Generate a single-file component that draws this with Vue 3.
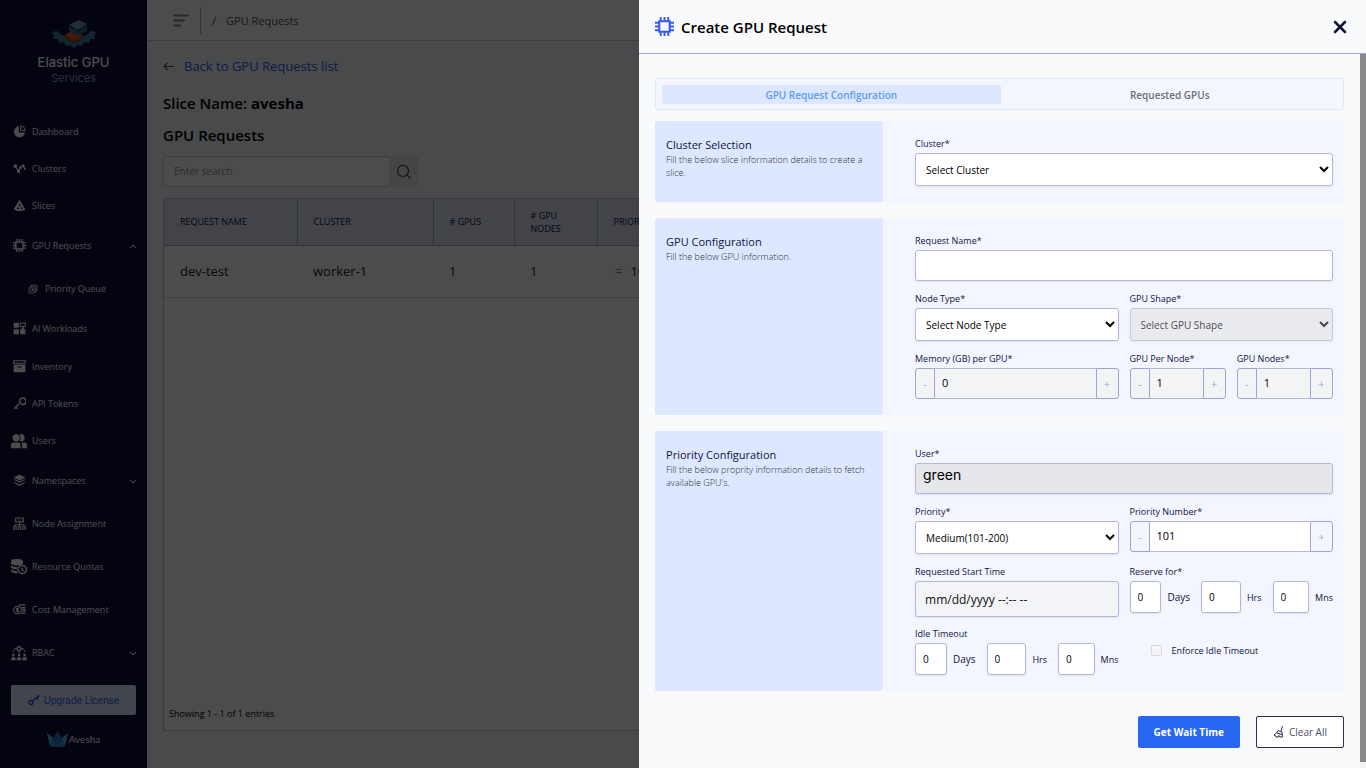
<script setup>
import { ref } from 'vue'

const chip = [
  { s: 'M4.500 4.500h11v11h-11z', w: 2.2 },
  { s: 'M6 0v4M10 0v4M14 0v4M6 16v4M10 16v4M14 16v4M0 6h4M0 10h4M0 14h4M16 6h4M16 10h4M16 14h4', w: 2 },
]

const nav = [
  { label: 'Dashboard', icon: [{ f: 'M9 2a8.500 8.500 0 1 0 9.500 9.500H9z' }, { s: 'M12 1.500a7 7 0 0 1 6.500 7h-6.500z', w: 1.6 }] },
  { label: 'Clusters', icon: [{ s: 'M3.500 7L9 14L12 7M16 6.500L18 10', w: 1.8 }, { f: 'M1 4h5v5H1zM6 11.500h5v5H6zM10 7h3.500v3.500H10zM13.500 4h4v4h-4zM17 8.500h2.500V12H17z' }] },
  { label: 'Slices', icon: [{ f: 'M10 1L19 16Q10 21 1 16zM9 8v3h2.500V8zM6 13v2.500h3V13zM12 13v2.500h2.500V13z' }] },
  { label: 'GPU Requests', icon: chip, arrow: 'up', tall: true },
  { label: 'Priority Queue', sub: true, tall: true, icon: [{ s: 'M6 6V2h12v12h-3M4 8V5h11v12h-2M2 8h10v10H2z', w: 1.5 }, { f: 'M5 11h2v4H5zM8 10h2v4H8z' }] },
  { label: 'AI Workloads', icon: [{ f: 'M1 1h8v8H1zM1 11h8v8H1zM11 11h8v8h-8z' }, { s: 'M11 2h8v5h-8z', w: 1.6 }, { f: 'M14 8h3v4h-3z' }] },
  { label: 'Inventory', mid: true, icon: [{ s: 'M1 1h18v4H1z', w: 1.6 }, { f: 'M1 7h18v12H1zM7 10v1.500h6V10z' }] },
  { label: 'API Tokens', icon: [{ s: 'M13 2a5 5 0 1 1 0 9a5 5 0 0 1 0-9M9.500 10L2 18M4 15l3 3', w: 2.4 }] },
  { label: 'Users', big: true, icon: [{ f: 'M2 6a4.500 4.500 0 1 1 9 0a4.500 4.500 0 0 1-9 0M0 19v-4q0-3 4-3h5q3 0 3 3v4zM11 1.500q6-1 6 4.500t-6 4.500q2-4 0-9M13.500 12h3q3.500 0 3.500 4v3h-6z' }] },
  { label: 'Namespaces', arrow: 'down', tall: true, icon: [{ f: 'M10 1l9 4.500l-9 4.500l-9-4.500zM1 9l2-1l7 3.500L17 8l2 1l-9 4.500zM1 13.500l2-1l7 3.500l7-3.500l2 1l-9 5z' }] },
  { label: 'Node Assignment', tall: true, icon: [{ s: 'M4 1.500h12v6H4zM10 8v4M3 15v-3h14v3M10 12v3M1 15h4v4H1zM8 15h4v4H8zM15 15h4v4h-4zM7 4.500h2M11 4.500h2', w: 1.6 }] },
  { label: 'Resource Quotas', tall: true, big: true, icon: [{ f: 'M0 3q0-3 7.500-3T15 3v3q-2 2-7.500 2T0 6zM0 8q3 2 8 2l-1 3q-5 0-7-2zM0 13q3 2 7 2l1 3q-6 0-8-3z' }, { s: 'M14 8a5.200 5.200 0 1 1-.01 0M14 10.500v3l2 1.500', w: 1.8 }] },
  { label: 'Cost Management', tall: true, icon: [{ s: 'M7 5a6 6 0 1 1-.01 0M9 8.500Q5 7.500 5 9.500T7 11t2 2q-.5 1.500-4 .5M7 7v8', w: 1.6 }, { s: 'M9 3.500q5-2 10 0M13 7h6M14.500 10h5M14.500 13h5M13 16h6', w: 2 }] },
  { label: 'RBAC', arrow: 'down', tall: true, big: true, icon: [{ s: 'M10 2a2.500 2.500 0 1 1-.01 0M7 4.500H5M13 4.500h2M10 7v3', w: 1.7 }, { s: 'M5 4L2 9M15 4l3 5', w: 1.2 }, { f: 'M1.500 11h3v3h-3zM8.500 11h3v3h-3zM15.500 11h3v3h-3zM0 19q0-4 3-4t3 4zM7 19q0-4 3-4t3 4zM14 19q0-4 3-4t3 4z' }] },
]

const search = ref('')
const requestName = ref('')
const startTime = ref('')
const enforce = ref(false)
const user = ref('green')
const memory = ref('0')
const perNode = ref('1')
const nodes = ref('1')
const priorityNumber = ref('101')
const reserve = ref([
  { unit: 'Days', value: '0' },
  { unit: 'Hrs', value: '0' },
  { unit: 'Mns', value: '0' },
])
const idle = ref([
  { unit: 'Days', value: '0' },
  { unit: 'Hrs', value: '0' },
  { unit: 'Mns', value: '0' },
])
</script>

<template>
  <div class="app">
    <aside class="sidebar">
      <div class="brand">
        <svg width="46" height="30" viewBox="0 0 46 30">
          <path d="M1 12l5-1 3 3 6 3 2 3 6 3 6-3 2-3 6-3 3-3 5 1-2 4 1 3-5 0-1 4-5-1-2 4-4-1-4 3-4-3-4 1-2-4-5 1-1-4-5 0 1-3z" fill="#3f7aa0" />
          <path d="M14 15l8-5 10 5-9 6z" fill="#e0562c" />
          <path d="M14 15v3l9 5v-3zM23 20l9-5v3l-9 5z" fill="#b23d1d" />
          <path d="M18 5l10-5 8 4-9 6z" fill="#6d9cc0" />
          <path d="M18 6v5l9 5v-5zM27 11l9-6v6l-9 5z" fill="#3a648b" />
        </svg>
        <div class="brand-name">Elastic GPU</div>
        <div class="brand-sub">Services</div>
      </div>
      <nav>
        <a v-for="item in nav" :key="item.label" href="#" class="nav-item" :class="{ tall: item.tall, mid: item.mid, sub: item.sub }">
          <span class="nav-icon">
            <svg :class="{ big: item.big }" viewBox="0 0 20 20">
              <path v-for="(p, i) in item.icon" :key="i" :d="p.f || p.s" :fill="p.f ? 'currentColor' : 'none'" fill-rule="evenodd" :stroke="p.s ? 'currentColor' : 'none'" :stroke-width="p.w || 0" />
            </svg>
          </span>
          <span>{{ item.label }}</span>
          <svg v-if="item.arrow" class="chevron" viewBox="0 0 8 8">
            <path :d="item.arrow === 'up' ? 'M1 6l3-3 3 3' : 'M1 3l3 3 3-3'" fill="none" stroke="currentColor" stroke-width="1" />
          </svg>
        </a>
      </nav>
      <button class="upgrade" type="button">
        <svg width="12" height="12" viewBox="0 0 12 12" fill="none" stroke="currentColor" stroke-width="1.500">
          <circle cx="3" cy="8.500" r="2" />
          <path d="M4.500 7L10.500 2M8 3l2 2.500M10.500 1v3" />
        </svg>
        Upgrade License
      </button>
      <div class="avesha">
        <svg width="21" height="16" viewBox="0 0 21 16">
          <path d="M0 2l6 5 1 9-4-1z" fill="#6fb6e8" />
          <path d="M21 2l-6 5-1 9 4-1z" fill="#6fb6e8" />
          <path d="M10.500 0L15 7l-1 8-3.500 1L7 15 6 7z" fill="#2573c9" />
          <path d="M5 6l5.500 10L3 15zM16 6l-5.500 10 7.500-1z" fill="#3b8edc" />
        </svg>
        <span>Avesha</span>
      </div>
    </aside>

    <section class="page">
      <header class="topbar">
        <svg width="16" height="13" viewBox="0 0 16 13" stroke="#7e8898" stroke-width="2" stroke-linecap="round">
          <path d="M1 1.500h14M1 6.500h10M1 11.500h6" />
        </svg>
        <span class="divider"></span>
        <span class="slash">/</span>
        <span>GPU Requests</span>
      </header>
      <main class="content">
        <a href="#" class="back">
          <svg width="11" height="9" viewBox="0 0 11 9" fill="none" stroke="#555" stroke-width="1.200">
            <path d="M11 4.500H1M4.500 1L1 4.500 4.500 8" />
          </svg>
          <span>Back to GPU Requests list</span>
        </a>
        <h2>Slice Name: <b>avesha</b></h2>
        <h2>GPU Requests</h2>
        <div class="search">
          <input v-model="search" type="text" placeholder="Enter search" aria-label="Search">
          <button type="button" aria-label="Run search">
            <svg width="14" height="14" viewBox="0 0 14 14" fill="none" stroke="#444" stroke-width="1.200">
              <circle cx="6" cy="6" r="5.500" />
              <path d="M10 10l3.500 3.500" />
            </svg>
          </button>
        </div>
        <div class="table-box">
          <table>
            <colgroup>
              <col class="c1"><col class="c2"><col class="c3"><col class="c4"><col>
            </colgroup>
            <thead>
              <tr>
                <th>REQUEST NAME</th>
                <th>CLUSTER</th>
                <th># GPUS</th>
                <th># GPU NODES</th>
                <th>PRIORITY</th>
              </tr>
            </thead>
            <tbody>
              <tr>
                <td>dev-test</td>
                <td>worker-1</td>
                <td>1</td>
                <td>1</td>
                <td><span class="level">=</span>101</td>
              </tr>
            </tbody>
          </table>
          <p class="showing">Showing 1 - 1 of 1 entries</p>
        </div>
      </main>
    </section>

    <div class="overlay"></div>

    <section class="drawer" role="dialog" aria-labelledby="drawer-title">
      <header class="drawer-head">
        <svg class="drawer-chip" viewBox="0 0 20 20">
          <path v-for="(p, i) in chip" :key="i" :d="p.s" fill="none" stroke="currentColor" :stroke-width="p.w" />
        </svg>
        <h1 id="drawer-title">Create GPU Request</h1>
        <button class="close" type="button" aria-label="Close">
          <svg width="14" height="14" viewBox="0 0 14 14" fill="none" stroke="#11143f" stroke-width="2.500" stroke-linecap="round">
            <path d="M2 2l10 10M12 2L2 12" />
          </svg>
        </button>
      </header>

      <div class="drawer-body">
        <form class="form" @submit.prevent>
          <div class="tabs">
            <button type="button" class="tab active">GPU Request Configuration</button>
            <button type="button" class="tab">Requested GPUs</button>
          </div>

          <div class="card">
            <div class="card-info">
              <h3>Cluster Selection</h3>
              <p>Fill the below slice information details to create a slice.</p>
            </div>
            <div class="card-fields">
              <div class="field full">
                <label for="cluster">Cluster*</label>
                <select id="cluster"><option>Select Cluster</option></select>
              </div>
            </div>
          </div>

          <div class="card">
            <div class="card-info">
              <h3>GPU Configuration</h3>
              <p>Fill the below GPU information.</p>
            </div>
            <div class="card-fields">
              <div class="field full">
                <label for="request-name">Request Name*</label>
                <input id="request-name" v-model="requestName" class="box" type="text">
              </div>
              <div class="field">
                <label for="node-type">Node Type*</label>
                <select id="node-type"><option>Select Node Type</option></select>
              </div>
              <div class="field">
                <label for="gpu-shape">GPU Shape*</label>
                <select id="gpu-shape" disabled><option>Select GPU Shape</option></select>
              </div>
              <div class="field">
                <label for="memory">Memory (GB) per GPU*</label>
                <div class="stepper muted">
                  <button type="button" aria-label="Decrease memory">-</button>
                  <input id="memory" v-model="memory" type="text">
                  <button type="button" class="plus" aria-label="Increase memory">+</button>
                </div>
              </div>
              <div class="pair">
                <div class="field">
                  <label for="per-node">GPU Per Node*</label>
                  <div class="stepper muted">
                    <button type="button" aria-label="Decrease GPU per node">-</button>
                    <input id="per-node" v-model="perNode" type="text">
                    <button type="button" class="plus" aria-label="Increase GPU per node">+</button>
                  </div>
                </div>
                <div class="field">
                  <label for="gpu-nodes">GPU Nodes*</label>
                  <div class="stepper muted">
                    <button type="button" aria-label="Decrease GPU nodes">-</button>
                    <input id="gpu-nodes" v-model="nodes" type="text">
                    <button type="button" class="plus" aria-label="Increase GPU nodes">+</button>
                  </div>
                </div>
              </div>
            </div>
          </div>

          <div class="card">
            <div class="card-info">
              <h3>Priority Configuration</h3>
              <p>Fill the below proprity information details to fetch available GPU's.</p>
            </div>
            <div class="card-fields">
              <div class="field full">
                <label for="user">User*</label>
                <input id="user" v-model="user" class="box user" type="text" readonly>
              </div>
              <div class="field">
                <label for="priority">Priority*</label>
                <select id="priority"><option>Medium(101-200)</option></select>
              </div>
              <div class="field">
                <label for="priority-number">Priority Number*</label>
                <div class="stepper">
                  <button type="button" aria-label="Decrease priority">-</button>
                  <input id="priority-number" v-model="priorityNumber" type="text">
                  <button type="button" class="plus" aria-label="Increase priority">+</button>
                </div>
              </div>
              <div class="times full">
                <div class="field">
                  <label for="start-time">Requested Start Time</label>
                  <input id="start-time" v-model="startTime" class="box start" type="text" placeholder="mm/dd/yyyy --:-- --">
                </div>
                <div class="field">
                  <label for="reserve-Days">Reserve for*</label>
                  <div class="durations">
                    <div v-for="d in reserve" :key="d.unit" class="duration">
                      <input :id="'reserve-' + d.unit" v-model="d.value" class="box" type="text">
                      <label :for="'reserve-' + d.unit" :class="{ days: d.unit === 'Days' }">{{ d.unit }}</label>
                    </div>
                  </div>
                </div>
                <div class="field">
                  <label for="idle-Days">Idle Timeout</label>
                  <div class="durations">
                    <div v-for="d in idle" :key="d.unit" class="duration">
                      <input :id="'idle-' + d.unit" v-model="d.value" class="box" type="text">
                      <label :for="'idle-' + d.unit" :class="{ days: d.unit === 'Days' }">{{ d.unit }}</label>
                    </div>
                  </div>
                </div>
                <div class="enforce">
                  <input id="enforce" v-model="enforce" type="checkbox">
                  <label for="enforce">Enforce Idle Timeout</label>
                </div>
              </div>
            </div>
          </div>

          <div class="actions">
            <button type="submit" class="primary">Get Wait Time</button>
            <button type="button" class="ghost">
              <svg width="11" height="12" viewBox="0 0 11 12" fill="none" stroke="#2b2d55" stroke-width="1">
                <path d="M9.500 0L8 5M5 4.500L9 6l.5 5H7L6 9.500 5.500 11H3L2.500 9.500 1 9q3-1.500 4-4.500zM4 7l5 1.500" />
              </svg>
              Clear All
            </button>
          </div>
        </form>
        <div class="scroll-track"><div class="scroll-thumb"></div></div>
      </div>
    </section>
  </div>
</template>

<style>
body {
  overflow: hidden;
}
</style>

<style scoped>
.app {
  display: flex;
  height: 100vh;
  overflow: hidden;
  font-family: "Open Sans", "Noto Sans", sans-serif;
  font-size: 11px;
  color: #000;
}
.app *,
.app *::before {
  box-sizing: border-box;
}
button,
input,
select {
  font-family: inherit;
  margin: 0;
}
button {
  cursor: pointer;
}
a {
  text-decoration: none;
}

/* sidebar */
.sidebar {
  flex: 0 0 147px;
  background: #0e1038;
  color: #fff;
}
.brand {
  height: 113px;
  padding-top: 20px;
  text-align: center;
  font-family: Inter, "Open Sans", sans-serif;
}
.brand svg {
  display: block;
  margin: 0 auto;
}
.brand-name {
  margin-top: 3px;
  font-size: 13px;
  font-weight: 500;
  line-height: 18px;
}
.brand-sub {
  font-size: 11px;
  line-height: 14px;
  color: #8e9cc0;
}
.nav-item {
  display: flex;
  align-items: center;
  height: 37px;
  padding: 0 10px 0 9px;
  font-size: 9px;
  color: #fff;
  white-space: nowrap;
}
.nav-item.mid {
  height: 38px;
}
.nav-item.tall {
  height: 43px;
}
.nav-item.sub {
  padding-left: 23px;
}
.nav-icon {
  display: flex;
  justify-content: center;
  width: 20px;
  margin-right: 3px;
}
.sub .nav-icon {
  margin-right: 2px;
}
.nav-icon svg {
  width: 13px;
  height: 13px;
}
.nav-icon svg.big {
  width: 16px;
  height: 16px;
}
.sub .nav-icon svg {
  width: 10px;
  height: 10px;
}
.chevron {
  width: 8px;
  height: 8px;
  margin-left: auto;
}
.upgrade {
  display: flex;
  align-items: center;
  justify-content: center;
  gap: 4px;
  width: calc(100% - 22px);
  height: 30px;
  margin: 11px 11px 0;
  border: 0;
  border-radius: 2px;
  background: #dde7ff;
  color: #2563eb;
  font-family: "Liberation Sans", sans-serif;
  font-size: 10px;
}
.avesha {
  display: flex;
  align-items: center;
  justify-content: center;
  gap: 1px;
  height: 48px;
  font-family: Lato, sans-serif;
  font-size: 10px;
}

/* page behind the drawer */
.page {
  flex: 1;
  min-width: 0;
  display: flex;
  flex-direction: column;
  background: #f5f7fa;
}
.topbar {
  display: flex;
  align-items: center;
  height: 41px;
  padding-left: 26px;
  border-bottom: 1px solid #c9cacc;
  background: #fff;
  color: #555;
}
.divider {
  width: 1px;
  height: 27px;
  margin: 0 11px;
  background: #a0a3c0;
}
.slash {
  margin-right: 10px;
}
.content {
  flex: 1;
  display: flex;
  flex-direction: column;
  padding: 15px 16px 37px;
}
.back {
  display: flex;
  align-items: center;
  gap: 10px;
  height: 20px;
  margin-bottom: 15px;
  font-size: 13px;
  color: #2563eb;
}
h2 {
  margin: 0;
  font-size: 15px;
  font-weight: 600;
  line-height: 24px;
}
h2 b {
  font-weight: 700;
}
h2 + h2 {
  margin-top: 8px;
}
.search {
  display: flex;
  width: 256px;
  height: 31px;
  margin: 9px 0 11px;
}
.search input {
  flex: 1;
  min-width: 0;
  padding: 0 10px 1px;
  border: 1px solid #cdd0d6;
  border-right: 0;
  border-radius: 4px 0 0 4px;
  background: #fff;
  font-size: 10px;
}
.search input::placeholder {
  color: #8f9299;
}
.search button {
  display: grid;
  place-items: center;
  width: 30px;
  border: 0;
  border-radius: 0 4px 4px 0;
  background: #e6e7ee;
}
.table-box {
  flex: 1;
  display: flex;
  flex-direction: column;
  justify-content: space-between;
  border: 1px solid #c5c8d2;
  background: #fff;
}
table {
  width: 100%;
  table-layout: fixed;
  border-collapse: collapse;
}
.c1 { width: 133px; }
.c2 { width: 136px; }
.c3 { width: 81px; }
.c4 { width: 83px; }
th {
  height: 46px;
  padding: 0 16px;
  border-right: 1px solid #a4abcb;
  border-bottom: 1px solid #a4abcb;
  background: #dde4f7;
  color: #11143f;
  font-size: 9px;
  font-weight: 500;
  line-height: 13px;
  text-align: left;
}
td {
  height: 52px;
  padding: 0 16px;
  border-bottom: 1px solid #d9dbe0;
  font-size: 13px;
  color: #222;
}
.level {
  margin: 0 8px 0 2px;
  color: #b8902c;
}
.showing {
  margin: 0;
  padding: 0 5px 10px;
  font-size: 9px;
  line-height: 13px;
}
.overlay {
  position: fixed;
  inset: 0;
  background: rgba(0, 0, 0, 0.7);
}

/* drawer */
.drawer {
  position: fixed;
  inset: 0 0 0 auto;
  display: flex;
  flex-direction: column;
  width: 53.22%;
  background: #f9fafc;
}
.drawer-head {
  display: flex;
  align-items: center;
  flex: 0 0 54px;
  padding: 0 19px 0 16px;
  border-bottom: 1px solid #a2a4d6;
}
.drawer-chip {
  width: 19px;
  height: 19px;
  color: #3659ef;
}
h1 {
  margin: 0 auto 0 7px;
  font-size: 15px;
  font-weight: 600;
  line-height: 20px;
}
.close {
  display: grid;
  place-items: center;
  padding: 0;
  border: 0;
  background: none;
}
.drawer-body {
  flex: 1;
  display: flex;
  min-height: 0;
}
.scroll-track {
  flex: 0 0 6px;
  padding-bottom: 6px;
  background: #f1f1f1;
}
.scroll-thumb {
  height: 100%;
  background: #888;
}
.form {
  flex: 1;
  min-width: 0;
  padding: 24px 16px 20px;
}
.tabs {
  display: grid;
  grid-template-columns: 1fr 1fr;
  height: 32px;
  margin-bottom: 11px;
  padding: 6px 4px 5px 6px;
  border: 1px solid #dde8ff;
  border-radius: 2px;
  background: #f3f5ff;
}
.tab {
  padding: 0;
  border: 0;
  border-radius: 2px;
  background: none;
  color: #6b6e76;
  font-size: 10px;
  font-weight: 600;
}
.tab.active {
  background: #dde7ff;
  color: #5c9bf7;
}
.card {
  display: grid;
  grid-template-columns: 228px 1fr;
  margin-bottom: 16px;
  border-radius: 3px;
  background: #f3f5ff;
}
.card-info {
  padding: 16px 11px;
  border-radius: 3px;
  background: #dde7ff;
}
h3 {
  margin: 0;
  font-size: 11px;
  font-weight: 500;
  line-height: 16px;
  color: #11143f;
}
.card-info p {
  margin: 0;
  font-size: 9px;
  font-weight: 300;
  line-height: 13px;
  color: #333;
}
.card-fields {
  display: grid;
  grid-template-columns: 1fr 1fr;
  gap: 11px;
  align-items: start;
  padding: 16px 11px 16px 32px;
}
.full {
  grid-column: 1 / -1;
}
.pair,
.times {
  display: grid;
  grid-template-columns: 1fr 1fr;
  gap: 10px 11px;
}
.field,
.pair,
.times {
  min-width: 0;
}
.field > label {
  display: block;
  margin-bottom: 3px;
}
label {
  font-size: 9px;
  font-weight: 500;
  line-height: 13px;
  color: #11143f;
}
select,
.box {
  display: block;
  width: 100%;
  border: 1px solid #b5b5da;
  border-radius: 3px;
  background-color: #fff;
  color: #000;
  box-shadow: 0 1px 2px rgba(17, 20, 63, 0.08);
}
select {
  height: 33px;
  padding: 0 6px;
  font-size: 10px;
}
select:disabled {
  background-color: #e5e6ea;
  color: #000;
  opacity: 0.7;
}
.box {
  height: 31px;
  padding: 0 8px;
  font-size: 11px;
}
.user {
  padding: 0 7px 8px;
  background-color: #e5e7eb;
  font-family: Inter, "Open Sans", sans-serif;
  font-size: 14px;
}
.start {
  height: 36px;
  background-color: #f2f4f8;
  padding: 0 9px;
  font-size: 12px;
}
.start::placeholder {
  color: #111;
}
.stepper {
  display: flex;
  height: 31px;
}
.stepper button {
  flex: 0 0 20px;
  padding: 0;
  border: 1px solid #a2a4d6;
  border-radius: 3px 0 0 3px;
  background: #f3f5ff;
  color: #a2a4d6;
  font-size: 11px;
}
.stepper .plus {
  flex-basis: 23px;
  border-radius: 0 3px 3px 0;
}
.stepper.muted button,
.stepper.muted input {
  background: #f3f4f6;
}
.stepper input {
  flex: 1;
  min-width: 0;
  padding: 0 7px 2px;
  border: 1px solid #b5b5da;
  border-width: 1px 0;
  background: #fff;
  font-size: 11px;
}
.durations {
  display: grid;
  grid-template-columns: 1fr 1fr 1fr;
  gap: 11px;
}
.duration {
  display: flex;
  align-items: center;
  gap: 6px;
}
.duration .box {
  flex: 1;
  min-width: 0;
  height: 32px;
  padding: 0 7px;
  font-size: 10px;
}
.duration .days {
  font-size: 10px;
}
.enforce {
  display: flex;
  align-items: center;
  gap: 10px;
  height: 46px;
  padding-left: 21px;
}
.enforce input {
  appearance: none;
  width: 11px;
  height: 11px;
  border: 1px solid #d8d9de;
  border-radius: 2px;
  background: #f5f5f6;
}
.enforce input:checked {
  background: #2563eb;
}
.actions {
  display: flex;
  justify-content: flex-end;
  gap: 16px;
  padding-top: 9px;
}
.actions button {
  display: flex;
  align-items: center;
  justify-content: center;
  gap: 5px;
  height: 32px;
  padding: 0 16px;
  border: 1px solid #2b2d55;
  border-radius: 2px;
  background: #fff;
  color: #4b4d6d;
  font-size: 10px;
}
.actions .primary {
  padding: 0 15px;
  border-color: #2867f2;
  background: #2867f2;
  color: #fff;
  font-weight: 700;
}
</style>
